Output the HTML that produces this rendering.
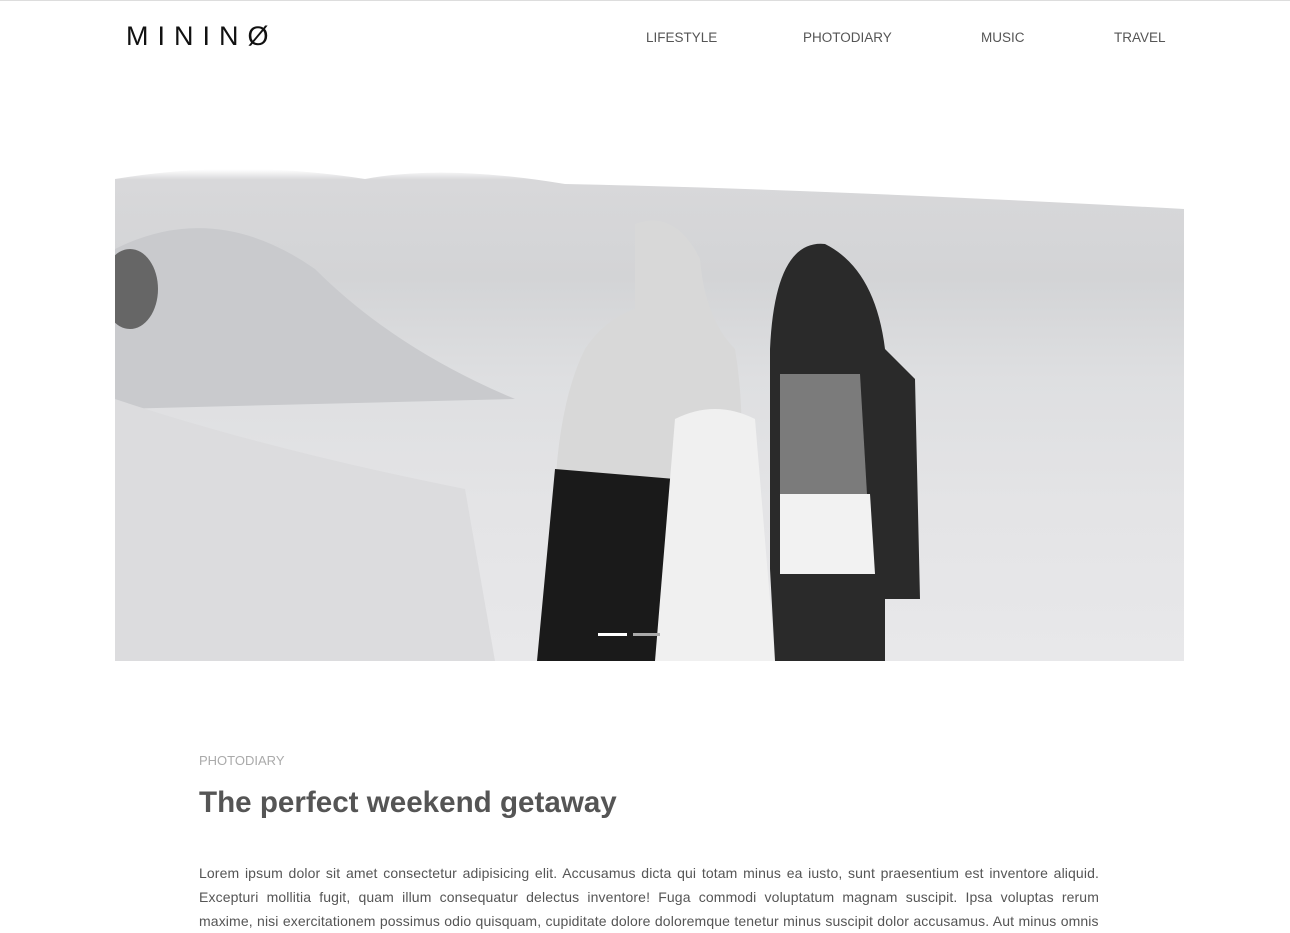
<!DOCTYPE html>
<html><head><meta charset="utf-8"><style>
body{margin:0;width:1290px;height:927px;overflow:hidden;background:#fff;font-family:"Liberation Sans",sans-serif;border-top:1px solid #ddd;box-sizing:border-box;position:relative}
.logo{position:absolute;left:126px;top:20px;font-size:27px;letter-spacing:9px;color:#111}
.nav a{position:absolute;top:29px;font-size:13.5px;color:#555;text-decoration:none}
.hero{position:absolute;left:115px;top:148px;width:1069px;height:512px;overflow:hidden;
background:linear-gradient(180deg,#fff 0,#fff 4%,#d8d8da 6%,#d3d4d6 25%,#dedfe1 45%,#e4e4e6 70%,#e8e8ea 100%)}
.cat{position:absolute;left:199px;top:752px;font-size:13px;color:#aaa}
h1{position:absolute;left:199px;top:785px;margin:0;font-size:29.6px;color:#555;font-weight:bold}
p{position:absolute;left:199px;top:860px;width:900px;margin:0;font-size:14px;letter-spacing:0.12px;word-spacing:0.3px;line-height:24px;color:#555;text-align:justify}
</style></head><body>
<div class="logo">MININØ</div>
<div class="nav"><a style="left:646px">LIFESTYLE</a><a style="left:803px">PHOTODIARY</a><a style="left:981px">MUSIC</a><a style="left:1114px">TRAVEL</a></div>
<div class="hero">
<svg width="1069" height="512" viewBox="0 0 1069 512">
<path d="M0 30 Q120 10 250 30 Q330 15 450 35 Q700 40 1069 60 L1069 0 L0 0Z" fill="#fff"/>
<path d="M0 100 Q100 50 200 120 Q280 200 400 250 L0 260Z" fill="#c9cacd"/>
<path d="M0 250 Q150 300 350 340 L380 512 L0 512Z" fill="#dcdcde"/>
<ellipse cx="15" cy="140" rx="28" ry="40" fill="#666"/>
<path d="M440 340 Q445 250 470 200 Q490 170 520 160 L520 75 Q560 60 585 110 Q590 170 620 200 Q630 260 625 330 L560 330Z" fill="#d8d8d8"/>
<path d="M422 512 L440 320 L560 330 L560 512Z" fill="#1a1a1a"/>
<path d="M540 512 L560 270 Q600 250 640 270 L660 512Z" fill="#f0f0f0"/>
<path d="M655 200 Q660 90 710 95 Q760 120 770 200 L800 230 L805 450 L770 450 L770 512 L660 512 L655 420Z" fill="#2a2a2a"/>
<path d="M665 225 L745 225 L752 345 L665 345Z" fill="#7b7b7b"/>
<path d="M665 345 L755 345 L760 425 L665 425Z" fill="#f2f2f2"/>
<rect x="483" y="484" width="29" height="3" fill="#fff"/><rect x="518" y="484" width="27" height="3" fill="#aaa"/>
</svg></div>
<div class="cat">PHOTODIARY</div>
<h1>The perfect weekend getaway</h1>
<p>Lorem ipsum dolor sit amet consectetur adipisicing elit. Accusamus dicta qui totam minus ea iusto, sunt praesentium est inventore aliquid. Excepturi mollitia fugit, quam illum consequatur delectus inventore! Fuga commodi voluptatum magnam suscipit. Ipsa voluptas rerum maxime, nisi exercitationem possimus odio quisquam, cupiditate dolore doloremque tenetur minus suscipit dolor accusamus. Aut minus omnis</p>
</body></html>
